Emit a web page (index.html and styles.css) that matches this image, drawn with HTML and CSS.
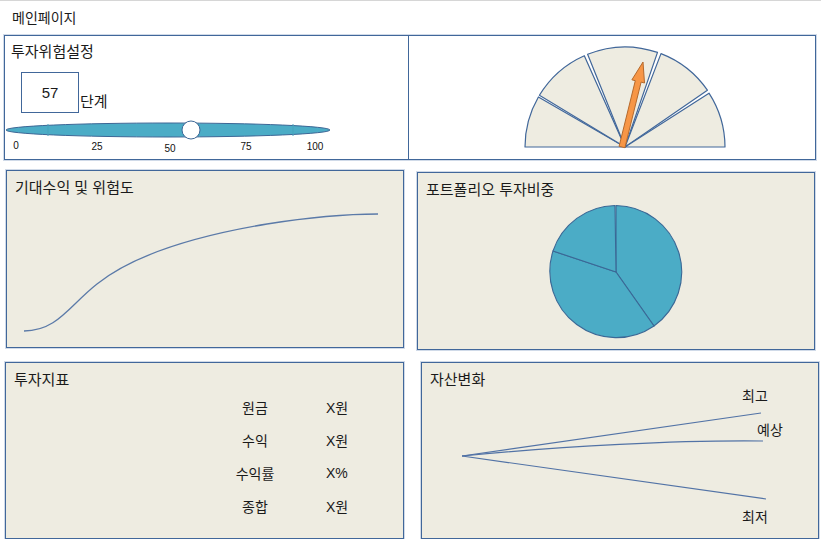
FILE: index.html
```html
<!DOCTYPE html>
<html lang="ko">

<head>
  <meta charset="UTF-8" />
  <meta name="viewport" content="width=device-width, initial-scale=1.0" />
  <title>메인페이지</title>
  <link rel="stylesheet" href="styles.css">
</head>

<body>
  <div class="header">메인페이지</div>

  <div class="top-panel">
    <div class="risk-setting">
      <div class="panel-title">투자위험설정</div>
      <div class="level-row">
        <div class="level-box">57</div>
        <span class="level-unit">단계</span>
      </div>
      <svg class="slider" width="404" height="36" viewBox="0 0 404 36">
        <ellipse cx="163" cy="14" rx="162" ry="7" fill="#4bacc6" stroke="#3d6796" stroke-width="1" />
        <line x1="43" y1="8" x2="43" y2="20" stroke="#46a3bc" stroke-width="1" />
        <line x1="288" y1="8" x2="288" y2="20" stroke="#46a3bc" stroke-width="1" />
        <circle cx="186" cy="14" r="9" fill="#fff" stroke="#3d6796" stroke-width="1" />
        <text class="tick" x="11" y="33" text-anchor="middle">0</text>
        <text class="tick" x="92" y="33.5" text-anchor="middle">25</text>
        <text class="tick" x="165" y="35.5" text-anchor="middle">50</text>
        <text class="tick" x="241" y="33.5" text-anchor="middle">75</text>
        <text class="tick" x="310" y="33.5" text-anchor="middle">100</text>
      </svg>
    </div>
    <div class="gauge">
      <svg width="405" height="123" viewBox="0 0 405 123">
        <g fill="#eeece1" stroke="#41679a" stroke-width="1.2" stroke-linejoin="round">
          <path d="M216,111 L116,111 A100,100 0 0,1 129.4,61 Z" />
          <path d="M216,111 L130.4,59.3 A100,100 0 0,1 175.3,19.7 Z" />
          <path d="M216,111 L178.6,18.3 A100,100 0 0,1 248.5,16.4 Z" />
          <path d="M216,111 L252,17.6 A100,100 0 0,1 298.4,54.2 Z" />
          <path d="M216,111 L300,57.2 A100,100 0 0,1 316,111 Z" />
        </g>
        <polygon points="210.1,110.3 215.9,111.7 232.1,46.1 235.5,47 234,26 222.9,43.8 226.3,44.7"
          fill="#f79646" stroke="#b5692c" stroke-width="1" stroke-linejoin="round" />
      </svg>
    </div>
  </div>

  <div class="row row-middle">
    <div class="card card-return">
      <div class="card-title">기대수익 및 위험도</div>
      <svg width="396" height="148" viewBox="0 0 396 148">
        <path d="M17,133 C50,133 62,108 90,86 C130,54 200,36 260,26 C310,18 345,16 371,16"
          fill="none" stroke="#5b7aa8" stroke-width="1.3" />
      </svg>
    </div>
    <div class="card card-portfolio">
      <div class="card-title">포트폴리오 투자비중</div>
      <svg width="396" height="148" viewBox="0 0 396 148">
        <g fill="#4bacc6" stroke="#3a6896" stroke-width="1.1" stroke-linejoin="round">
          <path d="M198,72 L198,5.5 A66.5,66.5 0 0,1 236,126 Z" />
          <path d="M198,72 L236,126 A66.5,66.5 0 0,1 135,51 Z" />
          <path d="M198,72 L135,51 A66.5,66.5 0 0,1 197,5.5 Z" />
        </g>
      </svg>
    </div>
  </div>

  <div class="row row-bottom">
    <div class="card card-stats">
      <div class="card-title">투자지표</div>
      <div class="stats">
        <span class="stat-label">원금</span><span class="stat-value">X원</span>
        <span class="stat-label">수익</span><span class="stat-value">X원</span>
        <span class="stat-label">수익률</span><span class="stat-value">X%</span>
        <span class="stat-label">종합</span><span class="stat-value">X원</span>
      </div>
    </div>
    <div class="card card-assets">
      <div class="card-title">자산변화</div>
      <svg class="asset-chart" width="396" height="147" viewBox="0 0 396 147">
        <g fill="none" stroke="#5273a6" stroke-width="1.2">
          <path d="M40,66 L339,23" />
          <path d="M40,66 C140,56 260,50 341,51" />
          <path d="M40,66 L344,109" />
        </g>
        <text class="scenario" x="320" y="11">최고</text>
        <text class="scenario" x="335" y="45">예상</text>
        <text class="scenario" x="320" y="132">최저</text>
      </svg>
    </div>
  </div>
</body>

</html>
```

FILE: styles.css
```css
body {
  margin: 0;
  font-family: "Liberation Sans", "Noto Sans CJK KR", sans-serif;
  color: #1a1a1a;
  background-color: #fff;
}

svg {
  display: block;
  overflow: visible;
}

.header {
  height: 34px;
  line-height: 34px;
  padding-left: 12px;
  border-top: 1px solid #d6d6d6;
  font-size: 14px;
}

.top-panel {
  display: flex;
  width: 810px;
  height: 123px;
  margin-left: 4px;
  border: 1px solid #41679a;
  box-shadow: 0 0 0 1px rgba(120, 150, 190, 0.35);
}

.risk-setting {
  width: 403px;
  padding-top: 7px;
  border-right: 1px solid #41679a;
}

.panel-title,
.card-title {
  padding-left: 6px;
  font-size: 15px;
  line-height: 18px;
}

.level-row {
  display: flex;
  margin-top: 11px;
  margin-left: 16px;
}

.level-box {
  width: 56px;
  height: 39px;
  line-height: 40px;
  border: 1px solid #41679a;
  text-align: center;
  font-size: 15px;
}

.level-unit {
  align-self: flex-end;
  margin-left: 1px;
  margin-bottom: 2px;
  font-size: 15px;
  line-height: 18px;
}

.slider {
  margin-top: 3px;
}

.tick {
  font-family: "Liberation Sans", sans-serif;
  font-size: 10px;
  fill: #111;
}

.gauge {
  flex: 1;
}

.row {
  display: flex;
  align-items: flex-start;
}

.card {
  width: 396px;
  height: 176px;
  border: 1px solid #41679a;
  background-color: #eeece1;
  box-shadow: 0 0 0 1px rgba(120, 150, 190, 0.35);
}

.card .card-title {
  padding-top: 7px;
  padding-left: 8px;
  line-height: 20px;
}

.card-return {
  margin-top: 10px;
  margin-left: 6px;
}

.card-portfolio {
  margin-top: 12px;
  margin-left: 13px;
}

.card-stats {
  width: 397px;
  height: 175px;
  margin-top: 12px;
  margin-left: 5px;
}

.card-assets {
  height: 175px;
  margin-top: 12px;
  margin-left: 17px;
}

.stats {
  display: grid;
  grid-template-columns: 80px auto;
  grid-auto-rows: 33px;
  column-gap: 31px;
  margin-left: 209px;
  font-size: 14px;
  align-items: center;
}

.stat-label {
  text-align: center;
}

.scenario {
  font-family: "Noto Sans CJK KR", sans-serif;
  font-size: 14px;
  fill: #1a1a1a;
}
```
